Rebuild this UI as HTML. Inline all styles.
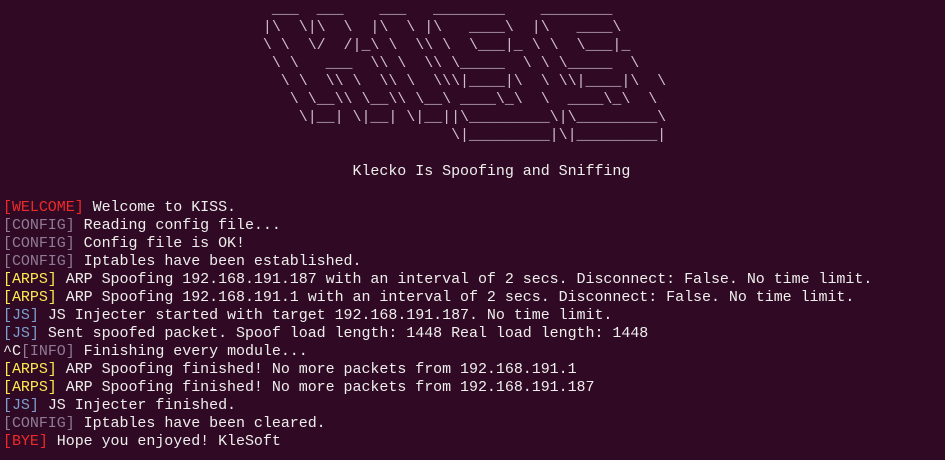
<!DOCTYPE html>
<html><head><meta charset="utf-8"><style>
html,body{margin:0;padding:0;background:#300a24;width:945px;height:460px;overflow:hidden}
pre{margin:0;position:absolute;left:3px;top:1px;font-family:"Liberation Mono","DejaVu Sans Mono",monospace;font-size:15px;line-height:18px;letter-spacing:-0.04px;color:#eeeeec;white-space:pre}
.a{color:#cdbccd}
.r{color:#ef2929}.g{color:#8f7b97}.y{color:#fce94f}.b{color:#7c9fd0}
</style></head><body>
<pre><span class="a">                              ___  ___    ___   ________    ________
                             |\  \|\  \  |\  \ |\   ____\  |\   ____\
                             \ \  \/  /|_\ \  \\ \  \___|_ \ \  \___|_
                              \ \   ___  \\ \  \\ \_____  \ \ \_____  \
                               \ \  \\ \  \\ \  \\\|____|\  \ \\|____|\  \
                                \ \__\\ \__\\ \__\ ____\_\  \  ____\_\  \
                                 \|__| \|__| \|__||\_________\|\_________\
                                                  \|_________|\|_________|</span>

                                       Klecko Is Spoofing and Sniffing

<span class="r">[WELCOME]</span> Welcome to KISS.
<span class="g">[CONFIG]</span> Reading config file...
<span class="g">[CONFIG]</span> Config file is OK!
<span class="g">[CONFIG]</span> Iptables have been established.
<span class="y">[ARPS]</span> ARP Spoofing 192.168.191.187 with an interval of 2 secs. Disconnect: False. No time limit.
<span class="y">[ARPS]</span> ARP Spoofing 192.168.191.1 with an interval of 2 secs. Disconnect: False. No time limit.
<span class="b">[JS]</span> JS Injecter started with target 192.168.191.187. No time limit.
<span class="b">[JS]</span> Sent spoofed packet. Spoof load length: 1448 Real load length: 1448
^C<span class="g">[INFO]</span> Finishing every module...
<span class="y">[ARPS]</span> ARP Spoofing finished! No more packets from 192.168.191.1
<span class="y">[ARPS]</span> ARP Spoofing finished! No more packets from 192.168.191.187
<span class="b">[JS]</span> JS Injecter finished.
<span class="g">[CONFIG]</span> Iptables have been cleared.
<span class="r">[BYE]</span> Hope you enjoyed! KleSoft</pre>
</body></html>
